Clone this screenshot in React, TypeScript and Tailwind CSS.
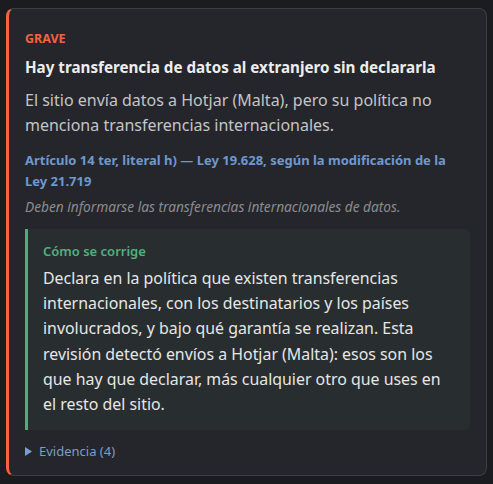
export default function App() {
  return (
    <div
      className="min-h-screen bg-[#1b1c20] px-[6px] pt-[8px] pb-[8px]"
      style={{ fontFamily: '"Noto Sans", "Open Sans", sans-serif' }}
    >
      <div className="rounded-[8px] border border-[#3a3d44] border-l-[3px] border-l-[#f0643f] bg-[#25262b] pl-[16px] pr-[16px] pt-[22px] pb-[15px]">
        <div className="text-[12.5px] font-bold uppercase leading-[16px] text-[#f0643f]">Grave</div>
        <h3 className="mt-[9px] text-[15.2px] font-bold leading-[22px] text-[#ededed]">
          Hay transferencia de datos al extranjero sin declararla
        </h3>
        <p className="mt-[10px] text-[16px] leading-[25px] text-[#c4c4c6]">
          El sitio envía datos a Hotjar (Malta), pero su política no menciona transferencias internacionales.
        </p>
        <p className="mt-[12px] text-[13px] font-bold leading-[21px] text-[#6e98cf]">
          Artículo 14 ter, literal h) — Ley 19.628, según la modificación de la Ley 21.719
        </p>
        <p className="mt-[6px] text-[13.7px] italic leading-[18px] text-[#8b8c90]">
          Deben informarse las transferencias internacionales de datos.
        </p>
        <div className="mt-[13px] rounded-r-[6px] border-l-[3px] border-l-[#4cae7c] bg-[#282e30] pl-[15px] pr-[16px] pt-[13px] pb-[13px]">
          <div className="text-[13px] font-semibold leading-[18px] text-[#52b07f]">Cómo se corrige</div>
          <p className="mt-[6px] text-[15.9px] leading-[25.2px] text-[#e6e6e6]">
            Declara en la política que existen transferencias internacionales, con los destinatarios y los países
            involucrados, y bajo qué garantía se realizan. Esta revisión detectó envíos a Hotjar (Malta): esos son los
            que hay que declarar, más cualquier otro que uses en el resto del sitio.
          </p>
        </div>
        <details className="mt-[12px]">
          <summary className="flex cursor-pointer list-none items-center gap-[7px] text-[13px] leading-[18px] text-[#7c9ccc] [&::-webkit-details-marker]:hidden">
            <svg width="7" height="9" viewBox="0 0 7 9" className="shrink-0">
              <polygon points="0,0 7,4.5 0,9" fill="#7c9ccc" />
            </svg>
            Evidencia (4)
          </summary>
        </details>
      </div>
    </div>
  );
}
